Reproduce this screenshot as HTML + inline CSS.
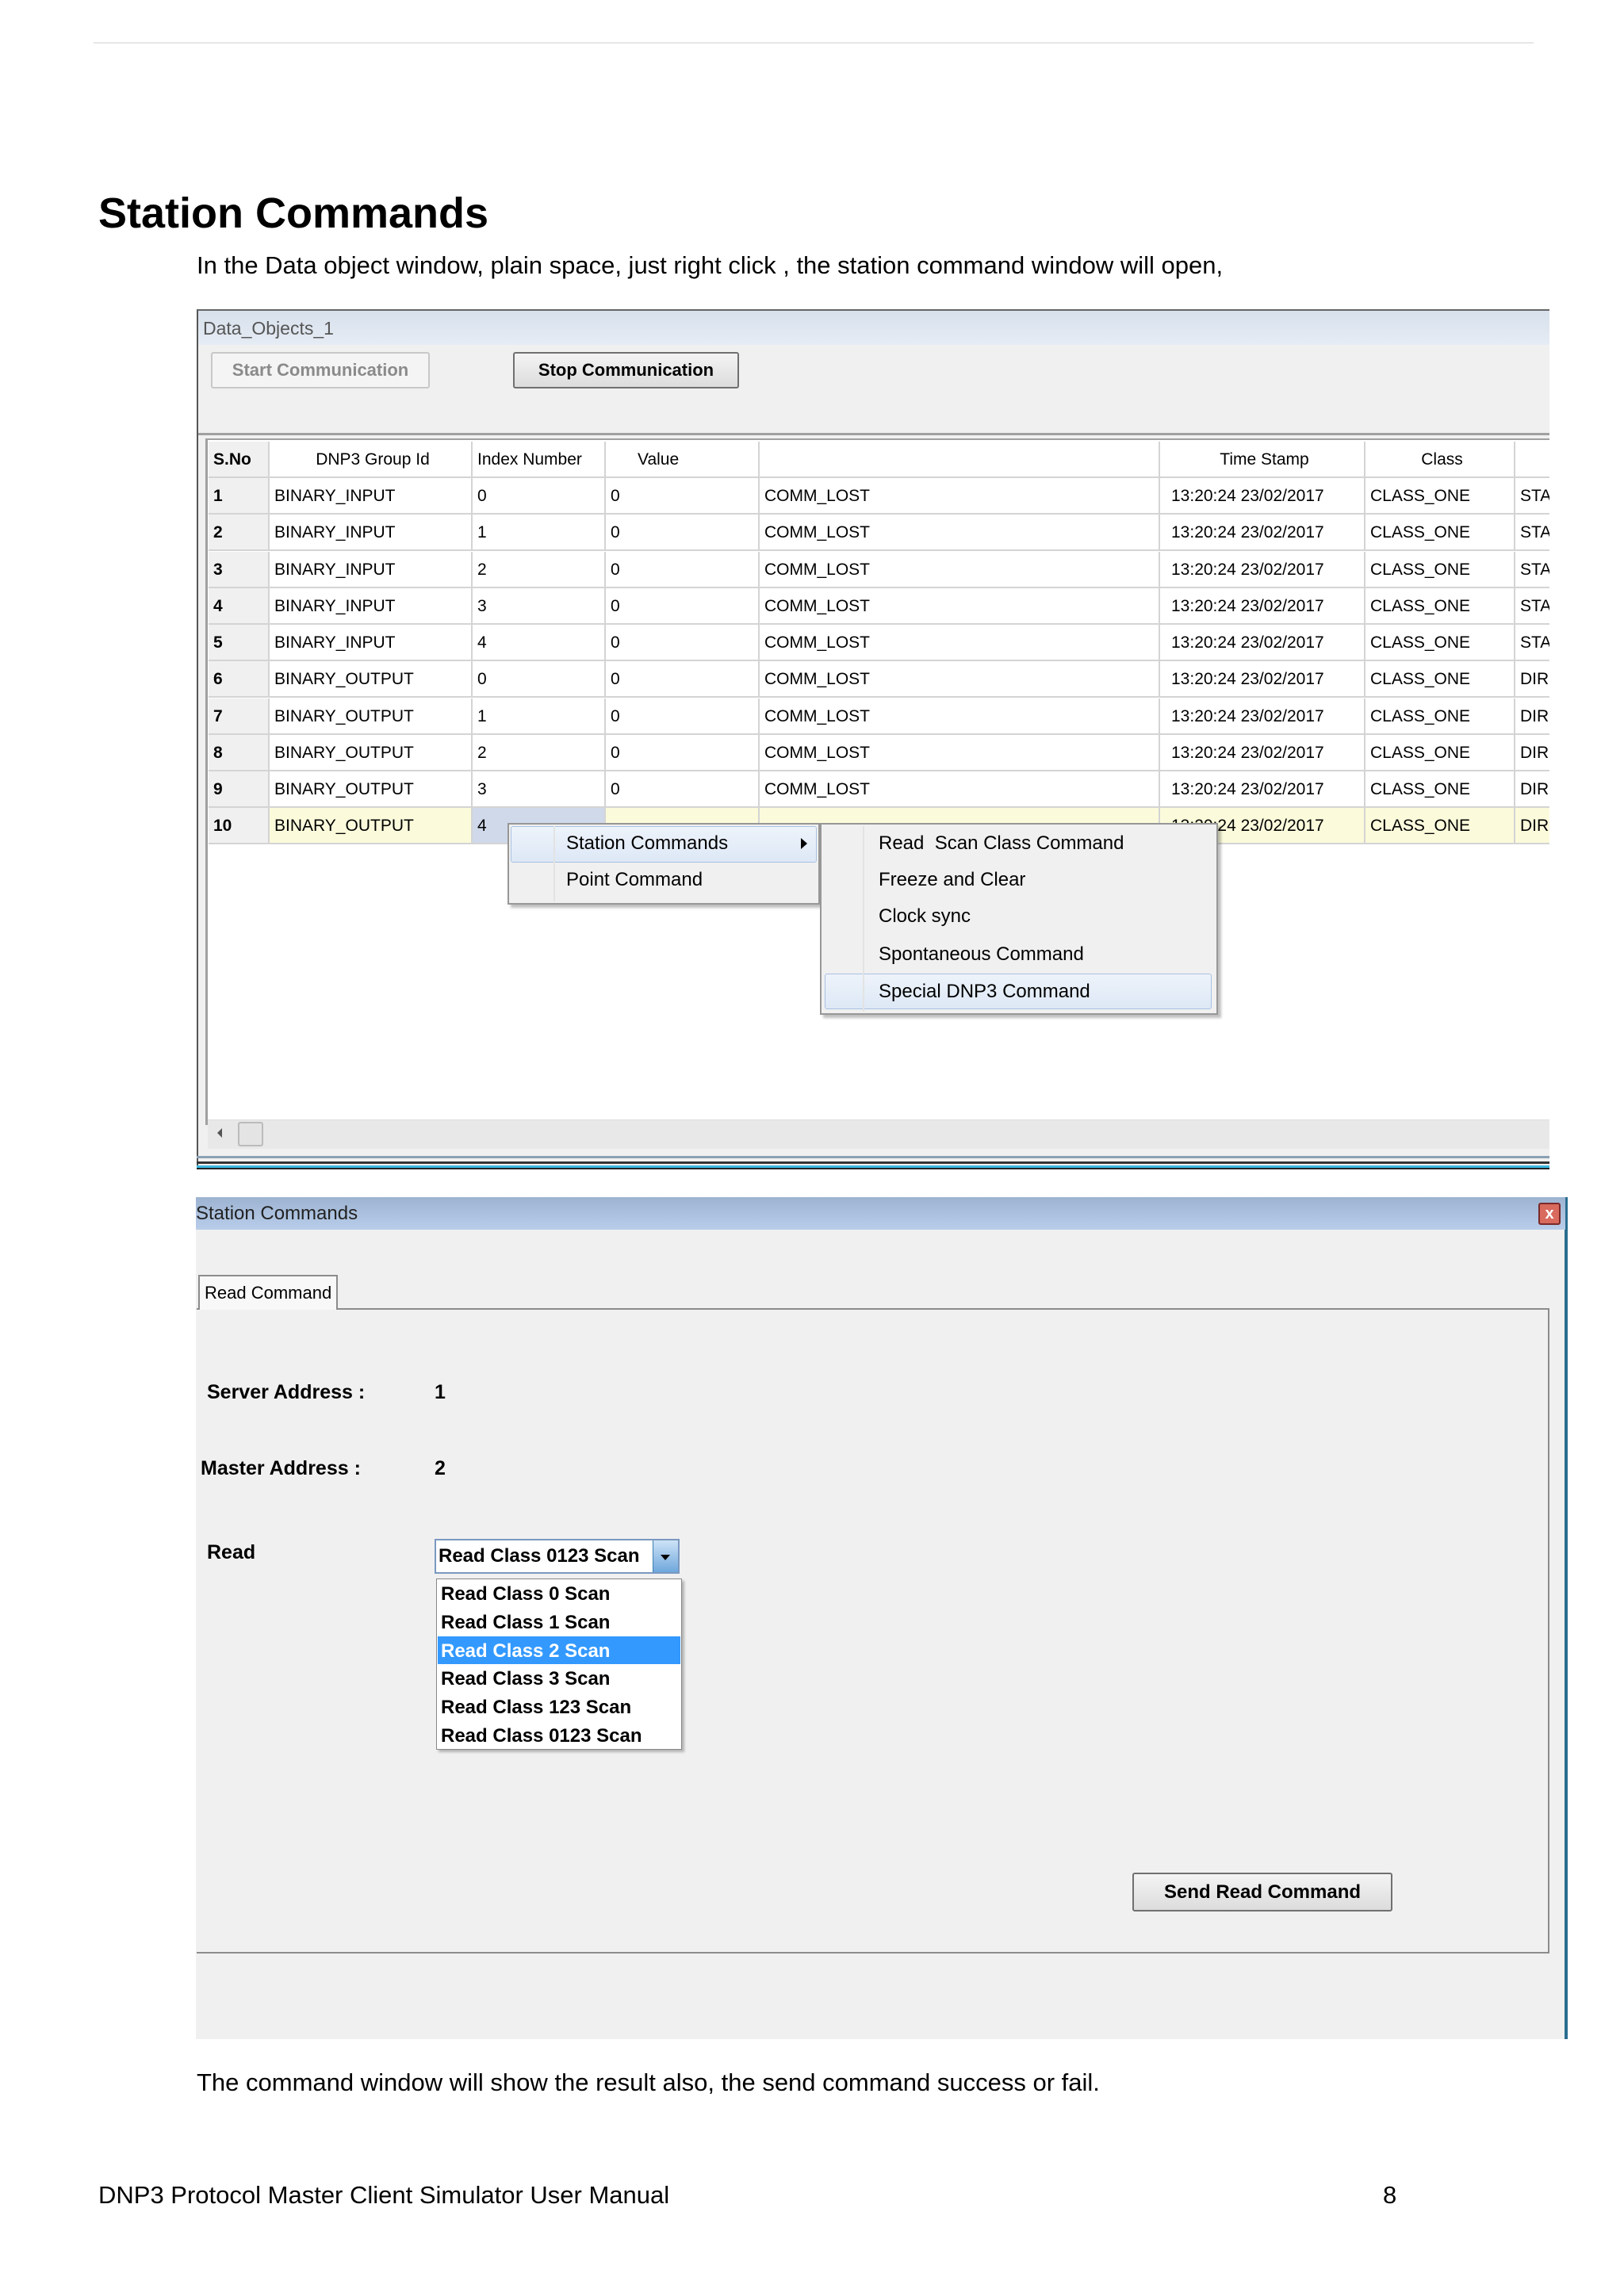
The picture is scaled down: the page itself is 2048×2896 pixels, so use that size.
<!DOCTYPE html>
<html><head><meta charset="utf-8">
<style>
*{margin:0;padding:0;box-sizing:border-box}
body{width:2048px;height:2896px;background:#fff;position:relative;font-family:"Liberation Sans",sans-serif;color:#000;overflow:hidden}
.a{position:absolute;white-space:nowrap}
.g{font-size:21px;line-height:46px}
.cell{position:absolute;border-right:2px solid #d4d4d4;border-bottom:2px solid #d4d4d4;height:46px;padding-left:6px;overflow:hidden}
.m{font-size:24px;line-height:46px}
.b{font-weight:bold}
</style></head><body>
<div class="a" style="left:118px;top:53px;width:1816px;height:2px;background:#e6e6e6"></div>
<div class="a b" style="left:124px;top:236px;font-size:54px;line-height:66px">Station Commands</div>
<div class="a" style="left:248px;top:314px;font-size:31px;line-height:42px">In the Data object window, plain space, just right click , the station command window will open,</div>

<div class="a" style="left:248px;top:390px;width:1706px;height:1084px;background:#f0f0f0;border-left:2px solid #555;border-top:2px solid #666"></div>
<div class="a" style="left:250px;top:392px;width:1704px;height:43px;background:linear-gradient(#d7e0ec,#e6ecf4)"></div>
<div class="a" style="left:256px;top:396px;font-size:23px;line-height:36px;color:#555">Data_Objects_1</div>
<div class="a" style="left:266px;top:444px;width:276px;height:46px;border:2px solid #c8c8c8;border-radius:3px;background:#f4f4f4;color:#8a8a8a;font-size:22px;line-height:42px;text-align:center;font-weight:bold">Start Communication</div>
<div class="a" style="left:647px;top:444px;width:285px;height:46px;border:2px solid #707070;border-radius:3px;background:linear-gradient(#f4f4f4,#dcdcdc);font-size:22px;line-height:42px;text-align:center;font-weight:bold">Stop Communication</div>
<div class="a" style="left:250px;top:546px;width:1704px;height:3px;background:#a0a0a0"></div>
<div class="a" style="left:259px;top:553px;width:1695px;height:866px;background:#fff;border-left:3px solid #a0a0a0;border-top:2px solid #a0a0a0"></div>

<div class="g" id="grid"></div>
<script>
var cols=[263,340,596,764,958,1463,1722,1911,1960];
var hdr=["S.No","DNP3 Group Id","Index Number","Value","","Time Stamp","Class",""];
var al=["left","center","left","left","left","center","center","left"];
var h='';
for(var c=0;c<8;c++){h+='<div class="cell g'+(c==0?' b':'')+'" style="left:'+cols[c]+'px;top:557px;width:'+(cols[c+1]-cols[c])+'px;text-align:'+(c==3?'left;padding-left:40px':al[c])+';background:'+(c==0?'#f0f0f0':'#fff')+'">'+hdr[c]+'</div>';}
for(var r=1;r<=10;r++){
 var t=603+46.25*(r-1);
 var grp=r<=5?'BINARY_INPUT':'BINARY_OUTPUT';
 var idx=r<=5?r-1:r-6;
 var last=r<=5?'STA':'DIR';
 var v=[String(r),grp,String(idx),r==10?'':'0',r==10?'':'COMM_LOST','13:20:24 23/02/2017','CLASS_ONE',last];
 for(var c=0;c<8;c++){
  var bg=c==0?'#f0f0f0':(r==10?'#fbfbdc':'#fff');
  if(r==10&&c==2)bg='#cfd9ea';
  h+='<div class="cell g'+(c==0?' b':'')+'" style="left:'+cols[c]+'px;top:'+t+'px;width:'+(cols[c+1]-cols[c])+'px;background:'+bg+';padding-left:'+(c==5?14:6)+'px">'+v[c]+'</div>';
 }
}
document.getElementById('grid').innerHTML=h;
</script>
<div class="a" style="left:1954px;top:380px;width:94px;height:1100px;background:#fff"></div>

<div class="a" style="left:640px;top:1038px;width:394px;height:103px;background:#f0f0f0;border:2px solid #979797;box-shadow:4px 4px 3px rgba(0,0,0,.25)"></div>
<div class="a" style="left:644px;top:1042px;width:386px;height:46px;background:linear-gradient(#eef3fa,#dde8f6);border:1px solid #a8c2e2;border-radius:3px"></div>
<div class="a" style="left:698px;top:1042px;width:2px;height:95px;background:#e2e3e3"></div>
<div class="a m" style="left:714px;top:1041px">Station Commands</div>
<div class="a" style="left:1010px;top:1057px;width:0;height:0;border-top:7px solid transparent;border-bottom:7px solid transparent;border-left:8px solid #000"></div>
<div class="a m" style="left:714px;top:1087px">Point Command</div>

<div class="a" style="left:1034px;top:1038px;width:502px;height:242px;background:#f0f0f0;border:2px solid #979797;box-shadow:4px 4px 3px rgba(0,0,0,.25)"></div>
<div class="a" style="left:1040px;top:1228px;width:488px;height:45px;background:linear-gradient(#eef3fa,#dde8f6);border:1px solid #a8c2e2;border-radius:3px"></div>
<div class="a" style="left:1088px;top:1042px;width:2px;height:234px;background:#e2e3e3"></div>
<div class="a m" style="left:1108px;top:1041px">Read&nbsp; Scan Class Command</div>
<div class="a m" style="left:1108px;top:1087px">Freeze and Clear</div>
<div class="a m" style="left:1108px;top:1133px">Clock sync</div>
<div class="a m" style="left:1108px;top:1181px">Spontaneous Command</div>
<div class="a m" style="left:1108px;top:1228px">Special DNP3 Command</div>

<div class="a" style="left:262px;top:1412px;width:1692px;height:37px;background:#e8e8e8;border-top:1px solid #ddd"></div>
<div class="a" style="left:274px;top:1423px;width:0;height:0;border-top:6px solid transparent;border-bottom:6px solid transparent;border-right:6px solid #555"></div>
<div class="a" style="left:300px;top:1415px;width:32px;height:31px;background:#e4e4e4;border:2px solid #bbb;border-radius:3px"></div>
<div class="a" style="left:248px;top:1458px;width:1706px;height:3px;background:#8aa0b4"></div>
<div class="a" style="left:248px;top:1465px;width:1706px;height:3px;background:#333"></div>
<div class="a" style="left:248px;top:1470px;width:1706px;height:5px;background:#3cb8e0;border-bottom:2px solid #222"></div>

<div class="a" style="left:247px;top:1510px;width:1730px;height:1062px;background:#f0f0f0;border-right:4px solid #2a6d90"></div>
<div class="a" style="left:247px;top:1510px;width:1727px;height:41px;background:linear-gradient(#9cb3d1,#b8cdea)"></div>
<div class="a" style="left:247px;top:1512px;font-size:24px;line-height:38px;color:#222">Station Commands</div>
<div class="a" style="left:1940px;top:1517px;width:28px;height:28px;background:#d96a5e;border:2px solid #7a2a2a;border-radius:3px;color:#fff;font-size:20px;line-height:24px;text-align:center;font-weight:bold">x</div>
<div class="a" style="left:248px;top:1650px;width:1706px;height:814px;border:2px solid #8c8c8c;border-left:none"></div>
<div class="a" style="left:250px;top:1608px;width:176px;height:44px;border:2px solid #8c8c8c;border-bottom:none;background:#f8f8f8;font-size:22px;line-height:42px;padding-left:6px">Read Command</div>

<div class="a b" style="left:261px;top:1738px;font-size:25px;line-height:36px">Server Address :</div>
<div class="a b" style="left:548px;top:1738px;font-size:25px;line-height:36px">1</div>
<div class="a b" style="left:253px;top:1834px;font-size:25px;line-height:36px">Master Address :</div>
<div class="a b" style="left:548px;top:1834px;font-size:25px;line-height:36px">2</div>
<div class="a b" style="left:261px;top:1940px;font-size:25px;line-height:36px">Read</div>

<div class="a" style="left:548px;top:1941px;width:309px;height:44px;background:#fff;border:2px solid #7a98c0"></div>
<div class="a b" style="left:553px;top:1944px;font-size:24px;line-height:38px">Read Class 0123 Scan</div>
<div class="a" style="left:823px;top:1943px;width:32px;height:40px;background:linear-gradient(#cde3f7,#6fa7dc);border-left:1px solid #3c7fb1"></div>
<div class="a" style="left:833px;top:1961px;width:0;height:0;border-left:6px solid transparent;border-right:6px solid transparent;border-top:7px solid #000"></div>

<div class="a" style="left:550px;top:1991px;width:310px;height:216px;background:#fff;border:1px solid #888;box-shadow:3px 3px 3px rgba(0,0,0,.25)"></div>
<div class="a" style="left:552px;top:2064px;width:306px;height:35px;background:#3399ff"></div>
<div class="a b" style="left:556px;top:1993px;font-size:24px;line-height:35.8px;color:#000">Read Class 0 Scan<br>Read Class 1 Scan<br><span style="color:#fff">Read Class 2 Scan</span><br>Read Class 3 Scan<br>Read Class 123 Scan<br>Read Class 0123 Scan</div>

<div class="a b" style="left:1428px;top:2362px;width:328px;height:49px;border:2px solid #707070;border-radius:3px;background:linear-gradient(#f4f4f4,#dcdcdc);font-size:24px;line-height:45px;text-align:center">Send Read Command</div>

<div class="a" style="left:248px;top:2606px;font-size:31px;line-height:42px">The command window will show the result also, the send command success or fail.</div>
<div class="a" style="left:124px;top:2748px;font-size:31px;line-height:42px">DNP3 Protocol Master Client Simulator User Manual</div>
<div class="a" style="left:1744px;top:2748px;font-size:31px;line-height:42px">8</div>
</body></html>
